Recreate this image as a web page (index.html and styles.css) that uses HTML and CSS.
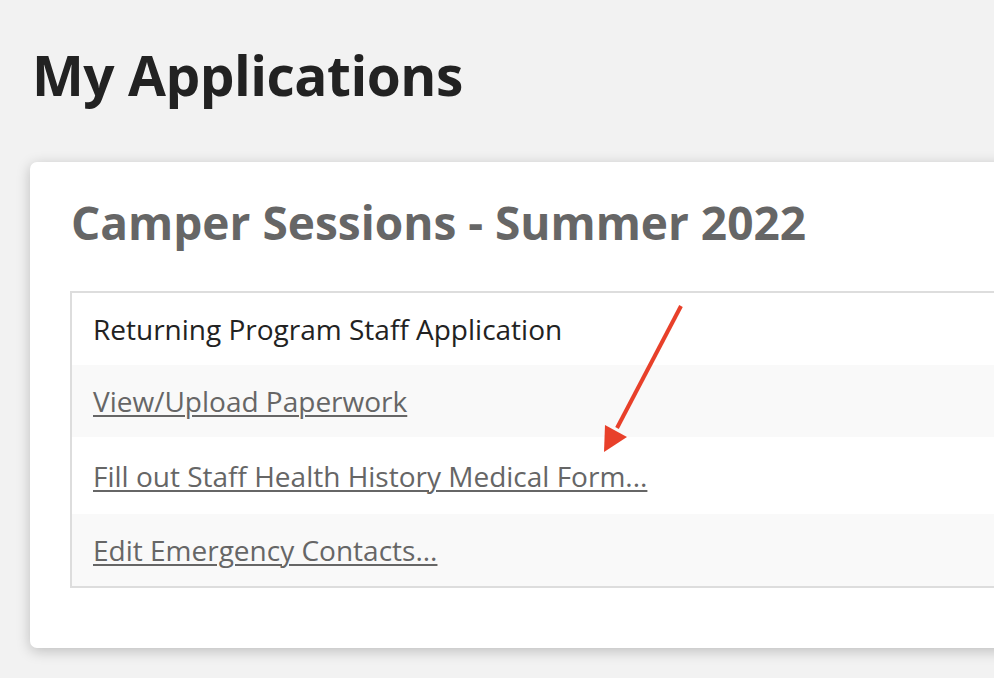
FILE: index.html
```html
<!DOCTYPE html>
<html>
<head>
<meta charset="utf-8">
<link rel="stylesheet" href="styles.css">
</head>
<body>
<main class="page">
  <h1 class="page-title">My Applications</h1>
  <section class="card">
    <h2 class="card-title">Camper Sessions - Summer 2022</h2>
    <div class="list">
      <div class="row row-head">Returning Program Staff Application</div>
      <div class="row alt"><a href="#" class="link">View/Upload Paperwork</a></div>
      <div class="row tall"><a href="#" class="link">Fill out Staff Health History Medical Form...</a></div>
      <div class="row alt"><a href="#" class="link">Edit Emergency Contacts...</a></div>
    </div>
  </section>
</main>
<svg class="arrow" width="994" height="678" viewBox="0 0 994 678">
  <line x1="681" y1="306" x2="617" y2="428" stroke="#e8402a" stroke-width="4" stroke-linecap="butt"/>
  <polygon points="604,452 605,425 627,437" fill="#e8402a"/>
</svg>
</body>
</html>
```
FILE: styles.css
```css
html, body {
  margin: 0;
  padding: 0;
  background: #f2f2f2;
  overflow: hidden;
  width: 994px;
  height: 678px;
}
body {
  font-family: "Open Sans", "Liberation Sans", sans-serif;
  position: relative;
}
.page {
  padding: 40px 0 0 30px;
}
.page-title {
  margin: 0 0 0 2px;
  font-size: 55px;
  font-weight: 700;
  letter-spacing: -0.5px;
  line-height: 70px;
  color: #222;
}
.card {
  margin-top: 52px;
  width: 1100px;
  background: #fff;
  border-radius: 7px;
  box-shadow: 0 3px 14px rgba(0,0,0,0.22);
  padding: 30px 0 60px 40px;
  box-sizing: border-box;
}
.card-title {
  margin: 0 0 39px 1px;
  font-size: 46px;
  font-weight: 700;
  line-height: 60px;
  color: #666;
}
.list {
  border: 2px solid #ddd;
  border-right: none;
}
.row {
  height: 72px;
  display: flex;
  align-items: center;
  padding-left: 21px;
  font-size: 28px;
  background: #fff;
}
.row.tall {
  height: 77px;
}
.row.alt {
  background: #f9f9f9;
}
.row-head {
  color: #222;
}
.link {
  color: #666;
  text-decoration: underline;
  text-underline-offset: 3px;
  text-decoration-thickness: 1.5px;
}
.arrow {
  position: absolute;
  left: 0;
  top: 0;
  pointer-events: none;
}
```
